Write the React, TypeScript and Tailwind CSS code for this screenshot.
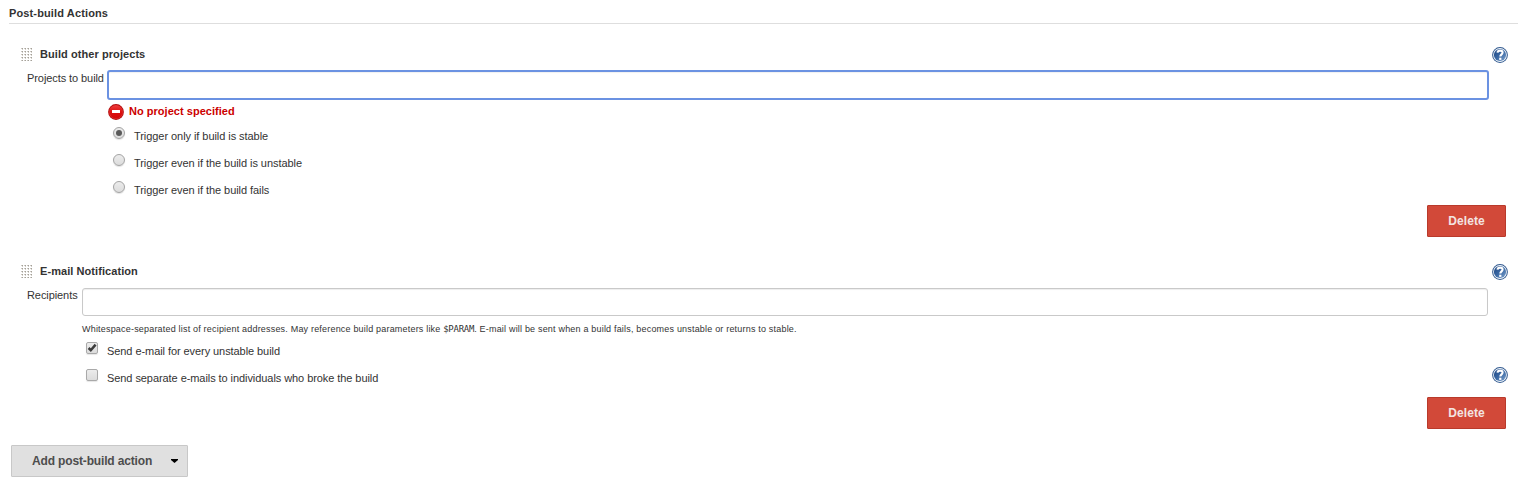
import { useState } from "react";

function HelpIcon() {
  return (
    <svg className="block h-4 w-4 shrink-0" viewBox="0 0 16 16" role="img" aria-label="Help">
      <defs>
        <linearGradient id="helpFill" x1="0" y1="0" x2="1" y2="1">
          <stop offset="0" stopColor="#1e4580" />
          <stop offset="0.5" stopColor="#3a68a4" />
          <stop offset="1" stopColor="#7fa3cc" />
        </linearGradient>
      </defs>
      <circle cx="8" cy="8" r="7.9" fill="#31598f" />
      <circle cx="8" cy="8" r="6.9" fill="#f4f8fc" />
      <circle cx="8" cy="8" r="6.1" fill="url(#helpFill)" />
      <path d="M5.5 5.6C5.7 4 6.8 3.6 8.1 3.6s2.5.7 2.5 2c0 1.7-2.3 1.9-2.3 4" fill="none" stroke="#fff" strokeWidth="2.1" />
      <rect x="7.2" y="10.7" width="2.2" height="2.2" fill="#fff" />
    </svg>
  );
}

function ErrorIcon() {
  return (
    <svg className="block h-4 w-4 shrink-0" viewBox="0 0 16 16" aria-hidden="true">
      <defs>
        <linearGradient id="errorFill" x1="0" y1="0" x2="0" y2="1">
          <stop offset="0" stopColor="#ee3a3a" />
          <stop offset="0.5" stopColor="#dc1010" />
          <stop offset="1" stopColor="#d40808" />
        </linearGradient>
      </defs>
      <circle cx="8" cy="8" r="7.9" fill="#b30c0c" />
      <circle cx="8" cy="8" r="7" fill="#e03030" />
      <circle cx="8" cy="8" r="6.5" fill="url(#errorFill)" />
      <rect x="4" y="6" width="8" height="3" rx="0.3" fill="#fff" />
    </svg>
  );
}

function DragHandle() {
  const steps = [0, 1, 2, 3];
  return (
    <svg className="block h-[13px] w-[12px] shrink-0" viewBox="0 0 12 13" shapeRendering="crispEdges" aria-hidden="true">
      {[0, 1, 2, 3, 4].map((row) =>
        steps.map((col) => (
          <g key={`${row}-${col}`}>
            <rect x={col * 3} y={row * 3} width="2" height="1" fill="#ccc9c3" />
            <rect x={col * 3 + 1} y={row * 3} width="1" height="1" fill="#a5a199" />
            <rect x={col * 3 + 1} y={row * 3 + 1} width="1" height="1" fill="#d2cfc9" />
          </g>
        ))
      )}
    </svg>
  );
}

function SectionTitle({ title }: { title: string }) {
  return (
    <div className="flex h-4 items-start pr-7 pl-[21px]">
      <div className="pt-px">
        <DragHandle />
      </div>
      <h2 className="ml-[7px] flex-1 leading-[14px] font-bold tracking-[0.07px]">{title}</h2>
      <HelpIcon />
    </div>
  );
}

function RadioOption({ label, checked, onSelect }: { label: string; checked: boolean; onSelect: () => void }) {
  return (
    <label className="flex h-[27px] items-start">
      <input type="radio" name="threshold" className="peer sr-only" checked={checked} onChange={onSelect} />
      <span className="mt-[5px] flex h-3 w-3 items-center justify-center rounded-full border border-[#a3a3a3] bg-linear-to-b from-[#ececec] to-[#dcdcdc] shadow-[0_1px_1px_rgba(0,0,0,0.12)]">
        {checked && <span className="h-1.5 w-1.5 rounded-full bg-[#5a5a5a]" />}
      </span>
      <span className="mt-[7px] ml-[9px] leading-[14px] tracking-[-0.06px]">{label}</span>
    </label>
  );
}

function CheckOption({ label, initial }: { label: string; initial: boolean }) {
  const [checked, setChecked] = useState(initial);
  return (
    <label className="flex h-[27px] items-start">
      <input type="checkbox" className="sr-only" checked={checked} onChange={() => setChecked(!checked)} />
      <span className="mt-[5px] h-3 w-3 rounded-[2px] border border-[#a9a9a9] bg-linear-to-b from-[#ececec] to-[#dcdcdc] shadow-[0_1px_1px_rgba(0,0,0,0.1)]">
        {checked && (
          <svg className="block h-[10px] w-[10px]" viewBox="0 0 10 10" aria-hidden="true">
            <path d="M1.6 5l2.2 2.2L8.6 1.6" fill="none" stroke="#3c3c3c" strokeWidth="2.5" />
          </svg>
        )}
      </span>
      <span className="mt-[7px] ml-[9px] leading-[14px] tracking-[-0.07px]">{label}</span>
    </label>
  );
}

function DeleteButton() {
  return (
    <button className="block h-8 w-[79px] rounded-[1px] border border-[#b93a2b] bg-[#d24939] text-xs leading-[14px] font-bold tracking-[0.08px] text-[#f3e4e2]">
      Delete
    </button>
  );
}

export default function App() {
  const [threshold, setThreshold] = useState(0);
  const thresholds = [
    "Trigger only if build is stable",
    "Trigger even if the build is unstable",
    "Trigger even if the build fails",
  ];
  return (
    <main className="h-[500px] bg-white font-['Liberation_Sans',Arial,sans-serif] text-[11px] text-[#333]">
      <h1 className="mr-[18px] ml-[9px] h-6 border-b border-[#dedede] pt-[6px] leading-[14px] font-bold tracking-[0.13px]">Post-build Actions</h1>

      <section className="pt-[23px]">
        <SectionTitle title="Build other projects" />
        <div className="mt-[7px] flex pr-[47px] pl-[27px]">
          <label htmlFor="projects" className="mt-px w-20 shrink-0 leading-[14px] tracking-[-0.08px] whitespace-nowrap">Projects to build</label>
          <input
            id="projects"
            className="h-[30px] min-w-0 flex-1 rounded-[3px] border-2 border-[#6b92e2] bg-white px-2 shadow-[inset_0_1px_1px_rgba(0,0,0,0.06)] outline-none"
          />
        </div>
        <div className="mt-1 flex h-4 items-start pl-[108px] font-bold text-[#c00]">
          <ErrorIcon />
          <span className="ml-[5px] leading-[14px] tracking-[0.03px]">No project specified</span>
        </div>
        <div className="mt-[2px] pl-[113px]">
          {thresholds.map((label, i) => (
            <RadioOption key={label} label={label} checked={threshold === i} onSelect={() => setThreshold(i)} />
          ))}
        </div>
        <div className="mt-[2px] flex justify-end pr-[30px]">
          <DeleteButton />
        </div>
      </section>

      <section className="pt-[27px]">
        <SectionTitle title="E-mail Notification" />
        <div className="mt-2 flex pr-12 pl-[27px]">
          <label htmlFor="recipients" className="w-[55px] shrink-0 leading-[14px] tracking-[-0.08px]">Recipients</label>
          <input
            id="recipients"
            className="h-7 min-w-0 flex-1 rounded-[3px] border border-[#c9c9c9] bg-white px-2 shadow-[inset_0_1px_1px_rgba(0,0,0,0.07)] outline-none"
          />
        </div>
        <p className="mt-[7px] pl-[82px] text-[9px] leading-[12px] tracking-[0.192px] whitespace-nowrap">
          Whitespace-separated list of recipient addresses. May reference build parameters like{" "}
          <code className="font-['DejaVu_Sans_Mono',monospace] text-[9px] tracking-[-0.25px]">$PARAM</code>. E-mail will be sent when a build fails, becomes
          unstable or returns to stable.
        </p>
        <div className="mt-[2px] flex items-end justify-between pr-7 pl-[86px]">
          <div>
            <CheckOption label="Send e-mail for every unstable build" initial={true} />
            <CheckOption label="Send separate e-mails to individuals who broke the build" initial={false} />
          </div>
          <div className="pb-[8px]">
            <HelpIcon />
          </div>
        </div>
        <div className="mt-[6px] flex justify-end pr-[30px]">
          <DeleteButton />
        </div>
      </section>

      <button className="mt-4 ml-[11px] flex h-8 w-[177px] items-center rounded-[1px] border border-[#c8c8c8] bg-[#e0e0e0] pl-5 text-xs font-bold text-[#4d4d4d]">
        <span className="w-[121px] text-left tracking-[-0.15px] whitespace-nowrap">Add post-build action</span>
        <svg className="ml-[18px] block h-1 w-[7px]" viewBox="0 0 7 4" aria-hidden="true">
          <path d="M0 0h7v1L3.5 4 0 1z" fill="#000" />
        </svg>
      </button>
    </main>
  );
}
